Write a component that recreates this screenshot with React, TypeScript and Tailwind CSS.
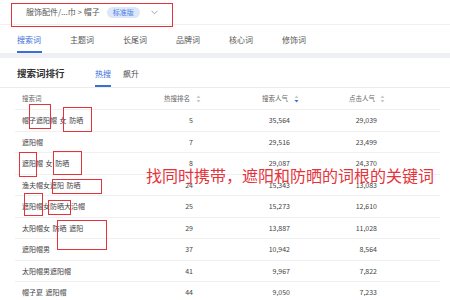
import React from "react";

const rows = [
  { word: "帽子遮阳帽 女 防晒", rank: "5", search: "35,564", click: "29,039" },
  { word: "遮阳帽", rank: "7", search: "29,516", click: "23,499" },
  { word: "遮阳帽 女 防晒", rank: "8", search: "29,087", click: "24,370" },
  { word: "渔夫帽女遮阳 防晒", rank: "24", search: "15,343", click: "13,083" },
  { word: "遮阳帽女防晒大沿帽", rank: "25", search: "15,273", click: "12,610" },
  { word: "太阳帽女 防晒 遮阳", rank: "29", search: "13,887", click: "11,028" },
  { word: "遮阳帽男", rank: "37", search: "10,942", click: "8,564" },
  { word: "太阳帽男遮阳帽", rank: "41", search: "9,967", click: "7,822" },
  { word: "帽子夏 遮阳帽", rank: "44", search: "9,050", click: "7,233" },
];

const tabs = ["搜索词", "主题词", "长尾词", "品牌词", "核心词", "修饰词"];

// red marks drawn over the table
const marks = [
  "left-[29px] top-[104px] w-[22px] h-[25px]",
  "left-[63px] top-[107px] w-[29px] h-[25px]",
  "left-[19px] top-[152px] w-[18px] h-[25px]",
  "left-[53px] top-[151px] w-[29px] h-[24px]",
  "left-[52px] top-[179px] w-[50px] h-[15px]",
  "left-[24px] top-[193px] w-[19px] h-[23px]",
  "left-[48px] top-[200px] w-[23px] h-[15px]",
  "left-[57px] top-[220px] w-[50px] h-[30px]",
];

const SortIcon = ({ active }: { active?: boolean }) => (
  <svg width="5" height="8" viewBox="0 0 5 8" className="shrink-0">
    <path d="M2.5 0.5 L4.5 3 L0.5 3 Z" fill="#c8c8c8" />
    <path d="M2.5 7.5 L4.5 5 L0.5 5 Z" fill={active ? "#3b6fd8" : "#c8c8c8"} />
  </svg>
);

const App = () => {
  return (
    <div className="relative w-[450px] h-[300px] overflow-hidden bg-white font-['Noto_Sans_CJK_SC',sans-serif]">
      {/* breadcrumb */}
      <div className="flex items-center h-[25px] pl-[26px] gap-[7px] border-b border-[#f0f0f0]">
        <span className="text-[8px] text-[#555]">服饰配件/...巾 &gt; 帽子</span>
        <span className="flex items-center h-[11px] px-[6px] rounded-full bg-[#dde7fa] text-[7px] text-[#4b7ddf]">标准版</span>
        <svg width="7" height="5" viewBox="0 0 7 5" className="ml-[4px]">
          <path d="M0.5 0.8 L3.5 3.8 L6.5 0.8" stroke="#999" strokeWidth="0.9" fill="none" />
        </svg>
      </div>

      {/* main tabs */}
      <div className="flex h-[28px] pl-[17px] gap-[28px] items-stretch">
        {tabs.map((t, i) => (
          <div key={t} className="flex flex-col justify-end">
            <span className={`text-[8px] leading-none w-[25px] ${i === 0 ? "text-[#3b6fd8]" : "text-[#555]"}`}>{t}</span>
            <div className={`mt-[7px] h-[2px] ${i === 0 ? "bg-[#3b6fd8]" : "bg-transparent"}`} />
          </div>
        ))}
      </div>
      <div className="h-[5px] bg-[#eef0f4]" />

      {/* ranking card */}
      <div className="flex items-stretch h-[30px] pl-[17px] border-b border-[#ececec]">
        <span className="self-center mt-[1px] text-[9.5px] font-bold text-[#333] w-[78px]">搜索词排行</span>
        <div className="flex flex-col justify-end">
          <span className="text-[8px] leading-none text-[#3b6fd8]">热搜</span>
          <div className="mt-[7px] h-[2px] w-[16px] bg-[#3b6fd8]" />
        </div>
        <div className="flex flex-col justify-end ml-[12px]">
          <span className="text-[8px] leading-none text-[#555]">飙升</span>
          <div className="mt-[7px] h-[2px]" />
        </div>
      </div>

      <div className="ml-[15px] mr-[10px]">
        <div className="flex h-[22px] items-center text-[6.5px] text-[#666] border-b border-[#f0f0f0]">
          <div className="w-[115px] pl-[7px]">搜索词</div>
          <div className="w-[74px] flex justify-end items-center gap-[6px] pr-[3px]">
            热搜排名 <SortIcon />
          </div>
          <div className="w-[98px] flex justify-end items-center gap-[6px] pr-[3px]">
            搜索人气 <SortIcon active />
          </div>
          <div className="w-[86px] flex justify-end items-center gap-[5px] pr-[3px]">
            点击人气 <SortIcon />
          </div>
        </div>
        {rows.map((r) => (
          <div key={r.word} className="flex h-[21.5px] items-center text-[7px] text-[#444] border-b border-[#f0f0f0]">
            <div className="w-[115px] pl-[7px] [word-spacing:1px]">{r.word}</div>
            <div className="w-[74px] text-right pr-[11px]">{r.rank}</div>
            <div className="w-[98px] text-right pr-[12px]">{r.search}</div>
            <div className="w-[86px] text-right pr-[11px]">{r.click}</div>
          </div>
        ))}
      </div>

      {/* annotations */}
      <div className="absolute left-[11px] top-[3px] w-[162px] h-[24px] border-[1.5px] border-[#e5333b]" />
      {marks.map((m) => (
        <div key={m} className={`absolute ${m} border-[1.5px] border-[#e5333b]`} />
      ))}
      <div className="absolute left-[146px] top-[166px] text-[16px] leading-[18px] text-[#e5333b] whitespace-nowrap">
        找同时携带，遮阳和防晒的词根的关键词
      </div>
    </div>
  );
};

export default App;
